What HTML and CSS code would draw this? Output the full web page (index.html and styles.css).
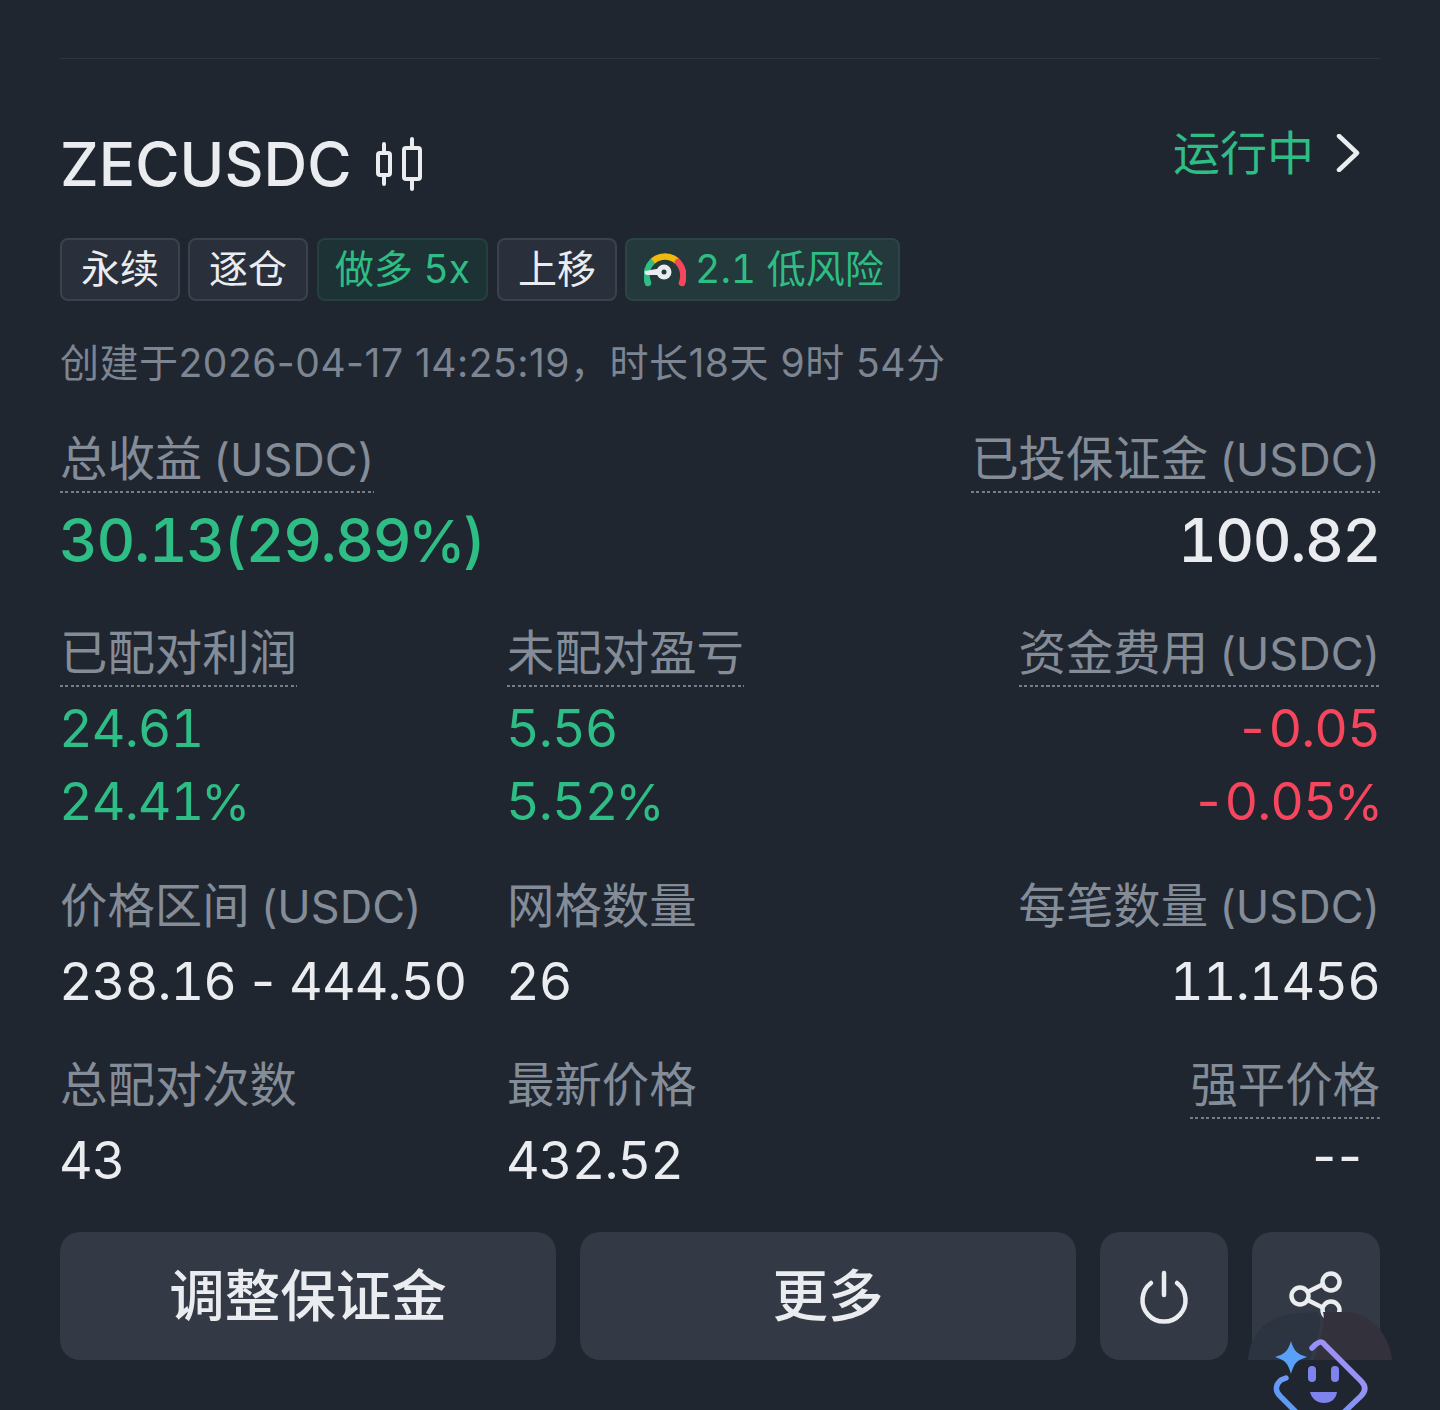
FILE: index.html
```html
<!DOCTYPE html>
<html lang="zh-CN">
<head>
  <meta charset="UTF-8" />
  <meta name="viewport" content="width=device-width, initial-scale=1.0"/>
  <title>ZECUSDC</title>
  <link rel="stylesheet" href="styles.css">
</head>
<body>

<div class="page">
  <div class="rule"></div>

  <div class="head">
    <div class="title">
      <span>ZECUSDC</span>
      <svg class="candle" width="50" height="54" viewBox="0 0 50 54" fill="none" stroke="#eaecef" stroke-width="4" stroke-linecap="round" stroke-linejoin="round">
        <path d="M8 7v9M8 38v9M36 2v9M36 42v10"/>
        <rect x="2" y="16" width="12" height="22" rx="2"/>
        <rect x="28" y="11" width="16" height="31" rx="2"/>
      </svg>
    </div>
    <div class="status">
      <span>运行中</span>
      <svg width="24" height="38" viewBox="0 0 24 38" fill="none" stroke="#eaecef" stroke-width="4.500" stroke-linecap="round" stroke-linejoin="round"><path d="M3 2l18 17L3 36"/></svg>
    </div>
  </div>

  <div class="tags">
    <span class="tag">永续</span>
    <span class="tag">逐仓</span>
    <span class="tag tag-green tag-long">做多 5x</span>
    <span class="tag">上移</span>
    <span class="tag tag-green tag-risk">
      <svg class="gauge" width="42" height="34" viewBox="0 0 42 34" fill="none">
        <path d="M4 30C1 22 3 14 8 9" stroke="#2ebd85" stroke-width="6.500" stroke-linecap="round"/>
        <path d="M9 8c7-6 17-6 24 0" stroke="#f0b90b" stroke-width="6.500"/>
        <path d="M34 9c5 6 7 13 4 21" stroke="#f6465d" stroke-width="6.500" stroke-linecap="round"/>
        <path d="M1 18l17-3v7H3c-2 0-3-3-2-4z" fill="#eaecef"/>
        <circle cx="20" cy="19" r="7.500" fill="#eaecef"/>
        <circle cx="20" cy="19" r="2.500" fill="#23393b"/>
      </svg>
      <span>2.1 低风险</span>
    </span>
  </div>

  <div class="created">创建于2026-04-17 14:25:19，时长18天 9时 54分</div>

  <div class="row row-main">
    <div class="cell">
      <span class="label dashed">总收益 <span class="unit">(USDC)</span></span>
      <div class="value big green">30.13(29.89<span class="pct">%</span>)</div>
    </div>
    <div class="cell"></div>
    <div class="cell end">
      <span class="label dashed">已投保证金 <span class="unit">(USDC)</span></span>
      <div class="value big">100.82</div>
    </div>
  </div>

  <div class="row row-pnl">
    <div class="cell">
      <span class="label dashed">已配对利润</span>
      <div class="value green">24.61</div>
      <div class="value green tight">24.41<span class="pct">%</span></div>
    </div>
    <div class="cell">
      <span class="label dashed">未配对盈亏</span>
      <div class="value green">5.56</div>
      <div class="value green tight">5.52<span class="pct">%</span></div>
    </div>
    <div class="cell end">
      <span class="label dashed">资金费用 <span class="unit">(USDC)</span></span>
      <div class="value red">-0.05</div>
      <div class="value red tight">-0.05<span class="pct">%</span></div>
    </div>
  </div>

  <div class="row row-info">
    <div class="cell">
      <span class="label">价格区间 <span class="unit">(USDC)</span></span>
      <div class="value">238.16 - 444.50</div>
    </div>
    <div class="cell">
      <span class="label">网格数量</span>
      <div class="value">26</div>
    </div>
    <div class="cell end">
      <span class="label">每笔数量 <span class="unit">(USDC)</span></span>
      <div class="value">11.1456</div>
    </div>
  </div>

  <div class="row row-info">
    <div class="cell">
      <span class="label">总配对次数</span>
      <div class="value">43</div>
    </div>
    <div class="cell">
      <span class="label">最新价格</span>
      <div class="value">432.52</div>
    </div>
    <div class="cell end">
      <span class="label dashed">强平价格</span>
      <div class="value dashes">--</div>
    </div>
  </div>

  <div class="actions">
    <button class="btn">调整保证金</button>
    <button class="btn">更多</button>
    <button class="btn btn-icon">
      <svg width="50" height="54" viewBox="0 0 50 54" fill="none" stroke="#eaecef" stroke-width="4.500" stroke-linecap="round"><path d="M25 3v22"/><path d="M12 13a21.500 21.500 0 1 0 26 0"/></svg>
    </button>
    <button class="btn btn-icon">
      <svg class="share" width="54" height="48" viewBox="0 0 54 48" fill="none" stroke="#eaecef" stroke-width="4.500"><circle cx="42" cy="11" r="8.500"/><circle cx="11" cy="25" r="8.500"/><circle cx="42" cy="39" r="8.500"/><path d="M18.500 21l16-8M18.500 29l16 8"/></svg>
    </button>
  </div>
</div>

<!-- floating assistant over the share button -->
<svg class="helper" width="144" height="98" viewBox="0 0 144 98" fill="none">
  <defs>
    <linearGradient id="edge" x1="0" y1="1" x2="1" y2="0">
      <stop offset="0" stop-color="#4f9df7"/>
      <stop offset="1" stop-color="#b78cf5"/>
    </linearGradient>
  </defs>
  <path d="M0 48C2 20 20 2 55 1l15-1c4 6 2 20-2 30l-6 18z" fill="#2c3442"/>
  <path d="M75 0h25c25 2 42 25 44 48H66c6-18 12-38 9-48z" fill="#33323c"/>
  <path d="M64 36l3-3c5-4 7-4 10 0l36 36c5 5 5 10 0 15L92 104M38 66l-5 2c-6 5-6 11-1 16l20 20" stroke="url(#edge)" stroke-width="5.500" stroke-linecap="round" stroke-linejoin="round"/>
  <path d="M43 29c3 10 6 13 16 16-10 3-13 6-16 17-3-11-6-14-16-17 10-3 13-6 16-16z" fill="#5a9ff8"/>
  <rect x="60" y="54" width="8" height="16" rx="4" fill="#7f83ee"/>
  <rect x="83" y="54" width="8" height="16" rx="4" fill="#7f83ee"/>
  <path d="M62 80h27c-1 7-6 11-13 11s-12-4-14-11z" fill="#7f83ee"/>
</svg>

</body>
</html>
```

FILE: styles.css
```css
html, body {
  margin: 0;
  height: 1410px;
  overflow: hidden;
}
body {
  position: relative;
  background: #1f2630;
  color: #eaecef;
  font-family: "Inter", "Noto Sans CJK SC", sans-serif;
}
.page {
  padding: 58px 60px 0;
}
.rule {
  height: 1px;
  background: #2c3440;
}

.head {
  display: flex;
  justify-content: space-between;
  align-items: flex-start;
  margin-top: 66px;
  height: 79px;
}
.title {
  display: flex;
  align-items: center;
  gap: 24px;
  font-size: 60.500px;
  line-height: 78px;
  font-weight: 500;
}
.status {
  display: flex;
  align-items: center;
  gap: 22px;
  padding-right: 20px;
  margin-top: -1px;
  font-size: 47px;
  line-height: 58px;
  color: #2ebd85;
}

.tags {
  display: flex;
  gap: 8px;
  margin-top: 34px;
}
.tag {
  display: flex;
  align-items: center;
  gap: 9px;
  box-sizing: border-box;
  height: 63px;
  padding: 0 19px 7px;
  border: 2px solid #3a424e;
  border-radius: 8px;
  background: #292f3b;
  font-size: 39px;
  color: #eaecef;
  font-variant-numeric: tabular-nums;
}
.tag-green {
  padding: 0 16px 7px;
  border-color: #24403f;
  background: #1d3234;
  color: #2ebd85;
}
.tag-long {
  margin: 0 1px 0 1px;
}
.tag-risk {
  padding: 0 14px 7px 17px;
  border-color: #2b4446;
  background: #23393b;
}
.gauge {
  margin-top: 7px;
}

.created {
  margin-top: 37px;
  font-size: 39px;
  line-height: 50px;
  letter-spacing: 0.5px;
  color: #7c8591;
}

.row {
  display: grid;
  grid-template-columns: 447px 1fr auto;
}
.row-main { margin-top: 41px; }
.row-pnl {
  margin-top: 48px;
  padding-bottom: 1px;
}
.row-info { margin-top: 36px; }

.cell {
  display: flex;
  flex-direction: column;
  align-items: flex-start;
}
.end {
  align-items: flex-end;
}
.label {
  box-sizing: border-box;
  height: 64px;
  font-size: 47.400px;
  line-height: 60px;
  color: #848c98;
}
.unit {
  margin-left: -2px;
  font-size: 45px;
}
.dashed {
  background: repeating-linear-gradient(90deg, #757d88 0 3px, transparent 3px 5.500px) bottom / 100% 2px no-repeat;
}

.value {
  margin: 5px 0 0 -1px;
  font-size: 52px;
  line-height: 74px;
  letter-spacing: -0.900px;
  word-spacing: -3px;
  font-variant-numeric: tabular-nums;
}
.end .value {
  margin-left: 0;
}
.row-pnl .tight { margin-top: -1px; }
.pct {
  margin-left: -2px;
  letter-spacing: -3px;
  font-size: 0.960em;
  line-height: 0;
}
.big {
  margin-top: 12px;
  font-size: 60px;
  line-height: 70px;
  font-weight: 550;
  letter-spacing: -1.400px;
}
.dashes {
  padding: 0 16px 8px 0;
  line-height: 66px;
  letter-spacing: 2px;
  font-variant-numeric: normal;
}
.green { color: #2ebd85; }
.red { color: #f6465d; }

.actions {
  display: grid;
  grid-template-columns: 1fr 1fr 128px 128px;
  gap: 24px;
  margin-top: 34px;
}
.btn {
  display: flex;
  align-items: center;
  justify-content: center;
  height: 128px;
  padding: 0 0 8px;
  border: none;
  border-radius: 20px;
  background: #333a46;
  color: #eaecef;
  font-family: inherit;
  font-size: 55.500px;
  font-weight: 500;
}
.btn-icon {
  padding: 0;
}
.btn-icon svg {
  margin-top: 2px;
}
.btn-icon .share {
  margin-top: -2px;
}

.helper {
  position: absolute;
  left: 1248px;
  top: 1312px;
}
```
